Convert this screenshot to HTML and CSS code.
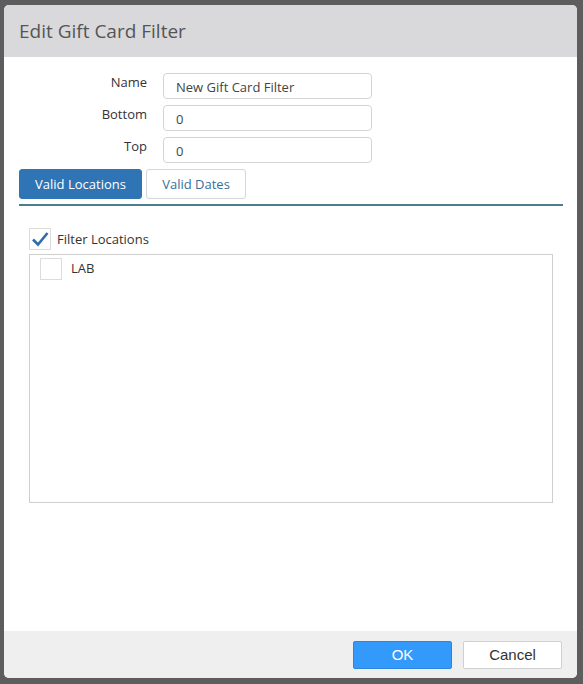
FILE: index.html
```html
<!DOCTYPE html>
<html>
<head>
<meta charset="utf-8">
<link rel="stylesheet" href="styles.css">
</head>
<body>
<div class="dialog">
  <div class="header"><span class="title">Edit Gift Card Filter</span></div>
  <div class="content">
    <div class="form">
      <label class="lbl">Name</label>
      <div class="input">New Gift Card Filter</div>
      <label class="lbl">Bottom</label>
      <div class="input">0</div>
      <label class="lbl">Top</label>
      <div class="input">0</div>
    </div>
    <div class="tabs">
      <div class="tab active">Valid Locations</div>
      <div class="tab">Valid Dates</div>
    </div>
    <div class="tabline"></div>
    <div class="pane">
      <div class="check-row">
        <span class="cb checked">
          <svg width="20" height="20" viewBox="0 0 20 20"><path d="M3 10.5 L8 15.5 L17.5 4" fill="none" stroke="#2f6ead" stroke-width="2.6" stroke-linecap="butt"/></svg>
        </span>
        <span class="check-text">Filter Locations</span>
      </div>
      <div class="listbox">
        <div class="list-item">
          <span class="cb"></span>
          <span class="item-text">LAB</span>
        </div>
      </div>
    </div>
  </div>
  <div class="footer">
    <button class="btn primary">OK</button>
    <button class="btn">Cancel</button>
  </div>
</div>
</body>
</html>
```

FILE: styles.css
```css
html, body {
  margin: 0;
  padding: 0;
  background: #5d5d5d;
}
body {
  width: 583px;
  height: 684px;
  overflow: hidden;
  font-family: "Open Sans", "Noto Sans", sans-serif;
}
.dialog {
  margin: 5px 0 0 4px;
  width: 573px;
  height: 673px;
  border-radius: 5px;
  overflow: hidden;
  display: flex;
  flex-direction: column;
  background: #fff;
}
.header {
  height: 52px;
  background: #d9d9dc;
  display: flex;
  align-items: center;
  padding-left: 15px;
  flex: none;
}
.title {
  font-size: 19px;
  color: #555;
}
.content {
  flex: 1;
  padding: 16px 14px 0 15px;
}
.form {
  display: grid;
  grid-template-columns: 128px 209px;
  column-gap: 16px;
  row-gap: 6px;
  align-items: start;
}
.lbl {
  text-align: right;
  font-size: 13px;
  color: #333;
  line-height: 18px;
}
.input {
  border: 1px solid #d4d4d4;
  border-radius: 4px;
  font-size: 13px;
  color: #444;
  padding: 2px 0 0 12px;
  box-sizing: border-box;
  height: 26px;
  line-height: 23px;
}
.tabs {
  display: flex;
  gap: 4px;
  margin-top: 6px;
}
.tab {
  height: 30px;
  box-sizing: border-box;
  border: 1px solid #d6d6d6;
  border-radius: 3px;
  font-size: 13px;
  color: #3a6f96;
  display: flex;
  align-items: center;
  justify-content: center;
  width: 100px;
}
.tab.active {
  width: 123px;
  background: #2f74b5;
  border-color: #2f74b5;
  color: #fff;
}
.tabline {
  height: 2px;
  background: #4b7e8e;
  margin-top: 5px;
}
.pane {
  padding: 22px 10px 0 10px;
}
.check-row {
  display: flex;
  align-items: center;
  height: 22px;
}
.cb {
  width: 20px;
  height: 20px;
  border: 1px solid #dcdcdc;
  display: inline-flex;
  align-items: center;
  justify-content: center;
  flex: none;
  background: #fff;
}
.check-text {
  margin-left: 6px;
  font-size: 13px;
  color: #333;
}
.listbox {
  margin-top: 4px;
  height: 249px;
  border: 1px solid #cfcfcf;
  box-sizing: border-box;
  padding: 3px 10px;
}
.list-item {
  display: flex;
  align-items: center;
  height: 22px;
}
.item-text {
  margin-left: 9px;
  font-size: 13px;
  color: #333;
  margin-top: -3px;
}
.footer {
  height: 47px;
  flex: none;
  background: #efefef;
  display: flex;
  align-items: center;
  justify-content: flex-end;
  padding-right: 15px;
  gap: 11px;
}
.btn {
  width: 99px;
  height: 28px;
  border: 1px solid #d0d0d0;
  border-radius: 2px;
  background: #fff;
  font-family: "Liberation Sans", Arial, sans-serif;
  font-size: 15px;
  color: #333;
  padding: 0;
  margin: 0;
}
.btn.primary {
  background: #3399fb;
  border-color: #2b86e0;
  color: #fff;
}
```
